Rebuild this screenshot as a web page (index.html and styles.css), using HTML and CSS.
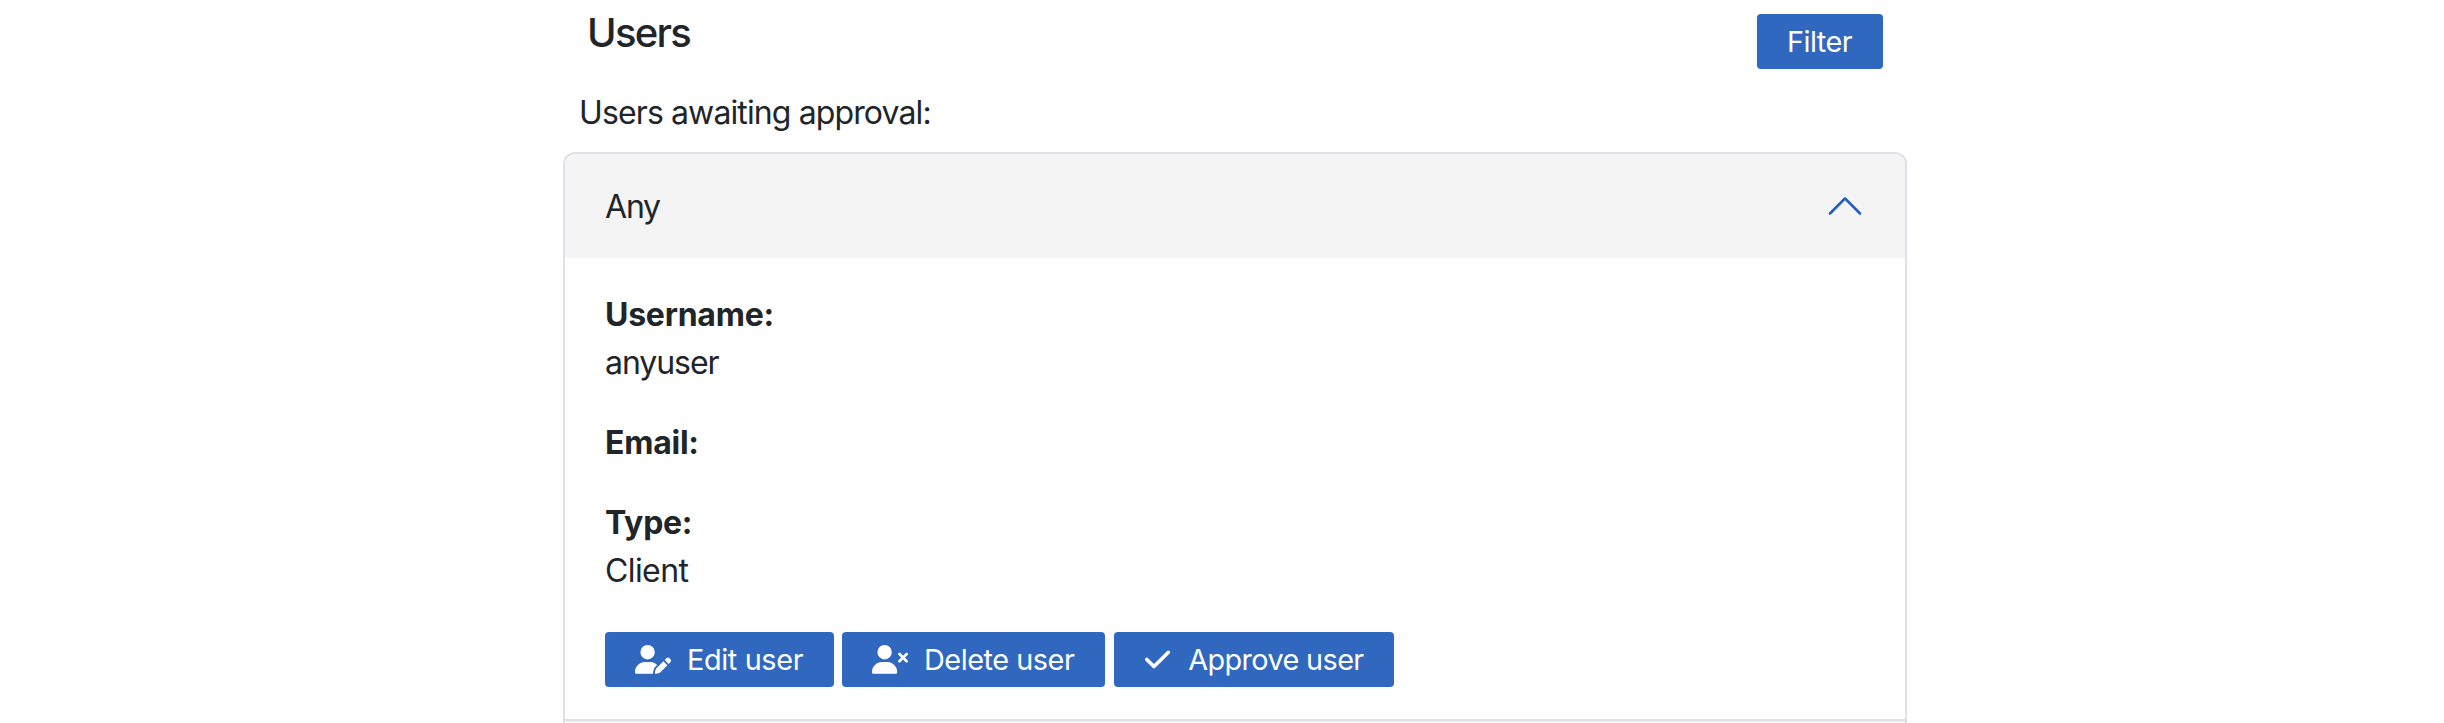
FILE: index.html
```html
<!DOCTYPE html>
<html lang="en">
<head>
<meta charset="utf-8">
<title>Users</title>
<link rel="stylesheet" href="styles.css">
</head>
<body>
<main class="page">
  <header class="page-head">
    <h1 class="title">Users</h1>
    <button class="btn btn-filter" type="button">Filter</button>
  </header>
  <p class="lead">Users awaiting approval:</p>
  <section class="accordion">
    <div class="acc-head">
      <span class="acc-name">Any</span>
      <svg class="chevron" viewBox="0 0 16 16"><path d="M1.646 4.646a.5.5 0 0 1 .708 0L8 10.293l5.646-5.647a.5.5 0 0 1 .708.708l-6 6a.5.5 0 0 1-.708 0l-6-6a.5.5 0 0 1 0-.708z"/></svg>
    </div>
    <div class="acc-body">
      <dl class="field"><dt>Username:</dt><dd class="value-name">anyuser</dd></dl>
      <dl class="field"><dt>Email:</dt></dl>
      <dl class="field"><dt>Type:</dt><dd>Client</dd></dl>
      <div class="actions">
        <button class="btn btn-edit" type="button">
          <svg class="icon" viewBox="0 0 640 512"><path d="M224 256A128 128 0 1 0 224 0a128 128 0 1 0 0 256zm-45.7 48C79.8 304 0 383.8 0 482.3C0 498.7 13.3 512 29.7 512H322.8c-3.1-8.8-3.7-18.4-1.4-27.8l15-60.1c2.8-11.3 8.6-21.5 16.8-29.7l40.3-40.3c-32.1-31-75.7-50.1-123.9-50.1H178.3zm435.5-68.3c-15.6-15.6-40.9-15.6-56.6 0l-29.4 29.4 71 71 29.4-29.4c15.6-15.6 15.6-40.9 0-56.6l-14.4-14.4zM375.9 417c-4.1 4.1-7 9.2-8.4 14.9l-15 60.1c-1.4 5.5 .2 11.2 4.2 15.2s9.7 5.6 15.2 4.2l60.1-15c5.6-1.4 10.8-4.3 14.9-8.4L576.1 358.7l-71-71L375.9 417z"/></svg>
          <span>Edit user</span>
        </button>
        <button class="btn btn-delete" type="button">
          <svg class="icon" viewBox="0 0 640 512"><path d="M96 128a128 128 0 1 1 256 0A128 128 0 1 1 96 128zM0 482.3C0 383.8 79.8 304 178.3 304h91.4C368.2 304 448 383.8 448 482.3c0 16.4-13.3 29.7-29.7 29.7H29.7C13.3 512 0 498.7 0 482.3zM471 143c9.4-9.4 24.6-9.4 33.9 0l47 47 47-47c9.4-9.4 24.6-9.4 33.9 0s9.4 24.6 0 33.9l-47 47 47 47c9.4 9.4 9.4 24.6 0 33.9s-24.6 9.4-33.9 0l-47-47-47 47c-9.4 9.4-24.6 9.4-33.9 0s-9.4-24.6 0-33.9l47-47-47-47c-9.4-9.4-9.4-24.6 0-33.9z"/></svg>
          <span>Delete user</span>
        </button>
        <button class="btn btn-approve" type="button">
          <svg class="icon icon-check" viewBox="0 0 448 512"><path d="M438.6 105.4c12.5 12.5 12.5 32.8 0 45.3l-256 256c-12.5 12.5-32.8 12.5-45.3 0l-128-128c-12.5-12.5-12.5-32.8 0-45.3s32.8-12.5 45.3 0L160 338.7 393.4 105.4c12.5-12.5 32.8-12.5 45.3 0z"/></svg>
          <span>Approve user</span>
        </button>
      </div>
    </div>
    <div class="acc-next"></div>
  </section>
</main>
</body>
</html>
```
FILE: styles.css
```css
* { box-sizing: border-box; }
body {
  margin: 0;
  background: #fff;
  color: #212529;
  font: 430 32px/48px Inter, "Liberation Sans", sans-serif;
  letter-spacing: -0.6px;
}
.page { width: 1344px; margin-left: 563px; }
.page-head {
  display: flex;
  justify-content: space-between;
  align-items: flex-start;
  height: 88px;
  padding: 9px 24px 0 24px;
}
.title { margin: 0; font-size: 40px; font-weight: 540; line-height: 48px; letter-spacing: -1.7px; }
.lead { margin: 0; padding: 1px 0 0 16px; height: 64px; letter-spacing: -0.88px; }
.accordion {
  height: 571px;
  border: 2px solid #dee2e6;
  border-bottom: 0;
  border-radius: 12px 12px 0 0;
  overflow: hidden;
}
.acc-head {
  display: flex;
  align-items: center;
  justify-content: space-between;
  height: 104px;
  padding: 0 40px;
  background: #f4f4f4;
}
.acc-name { padding-top: 2px; letter-spacing: -1.2px; }
.chevron { width: 40px; height: 40px; fill: #1f5ac5; transform: rotate(180deg); }
.acc-body { height: 461px; padding: 33px 40px 0; }
.field { margin: 0 0 32px; }
.field dt { font-weight: 700; letter-spacing: -0.25px; }
.field dd { margin: 0; }
.field .value-name { letter-spacing: -1.05px; }
.actions { display: flex; padding-top: 5px; }
.acc-next { height: 4px; border-top: 2px solid #dee2e6; background: #f4f4f4; }
.btn {
  display: flex;
  align-items: center;
  height: 55px;
  padding: 0 0 0 30px;
  border: 0;
  border-radius: 4px;
  background: #3068bf;
  color: #fff;
  font: inherit;
  font-size: 28.8px;
  letter-spacing: -0.5px;
  white-space: nowrap;
}
.btn-filter { width: 126px; margin-top: 5px; }
.btn-edit { width: 229px; margin-right: 8px; letter-spacing: -0.35px; }
.btn-delete { width: 263px; margin-right: 9px; letter-spacing: -0.45px; }
.btn-approve { width: 280px; letter-spacing: -0.6px; }
.icon { flex: none; width: 36px; height: 28.8px; margin-right: 16px; fill: currentColor; }
.icon-check { width: 25.2px; margin: 0 18px 0 1px; }
```
